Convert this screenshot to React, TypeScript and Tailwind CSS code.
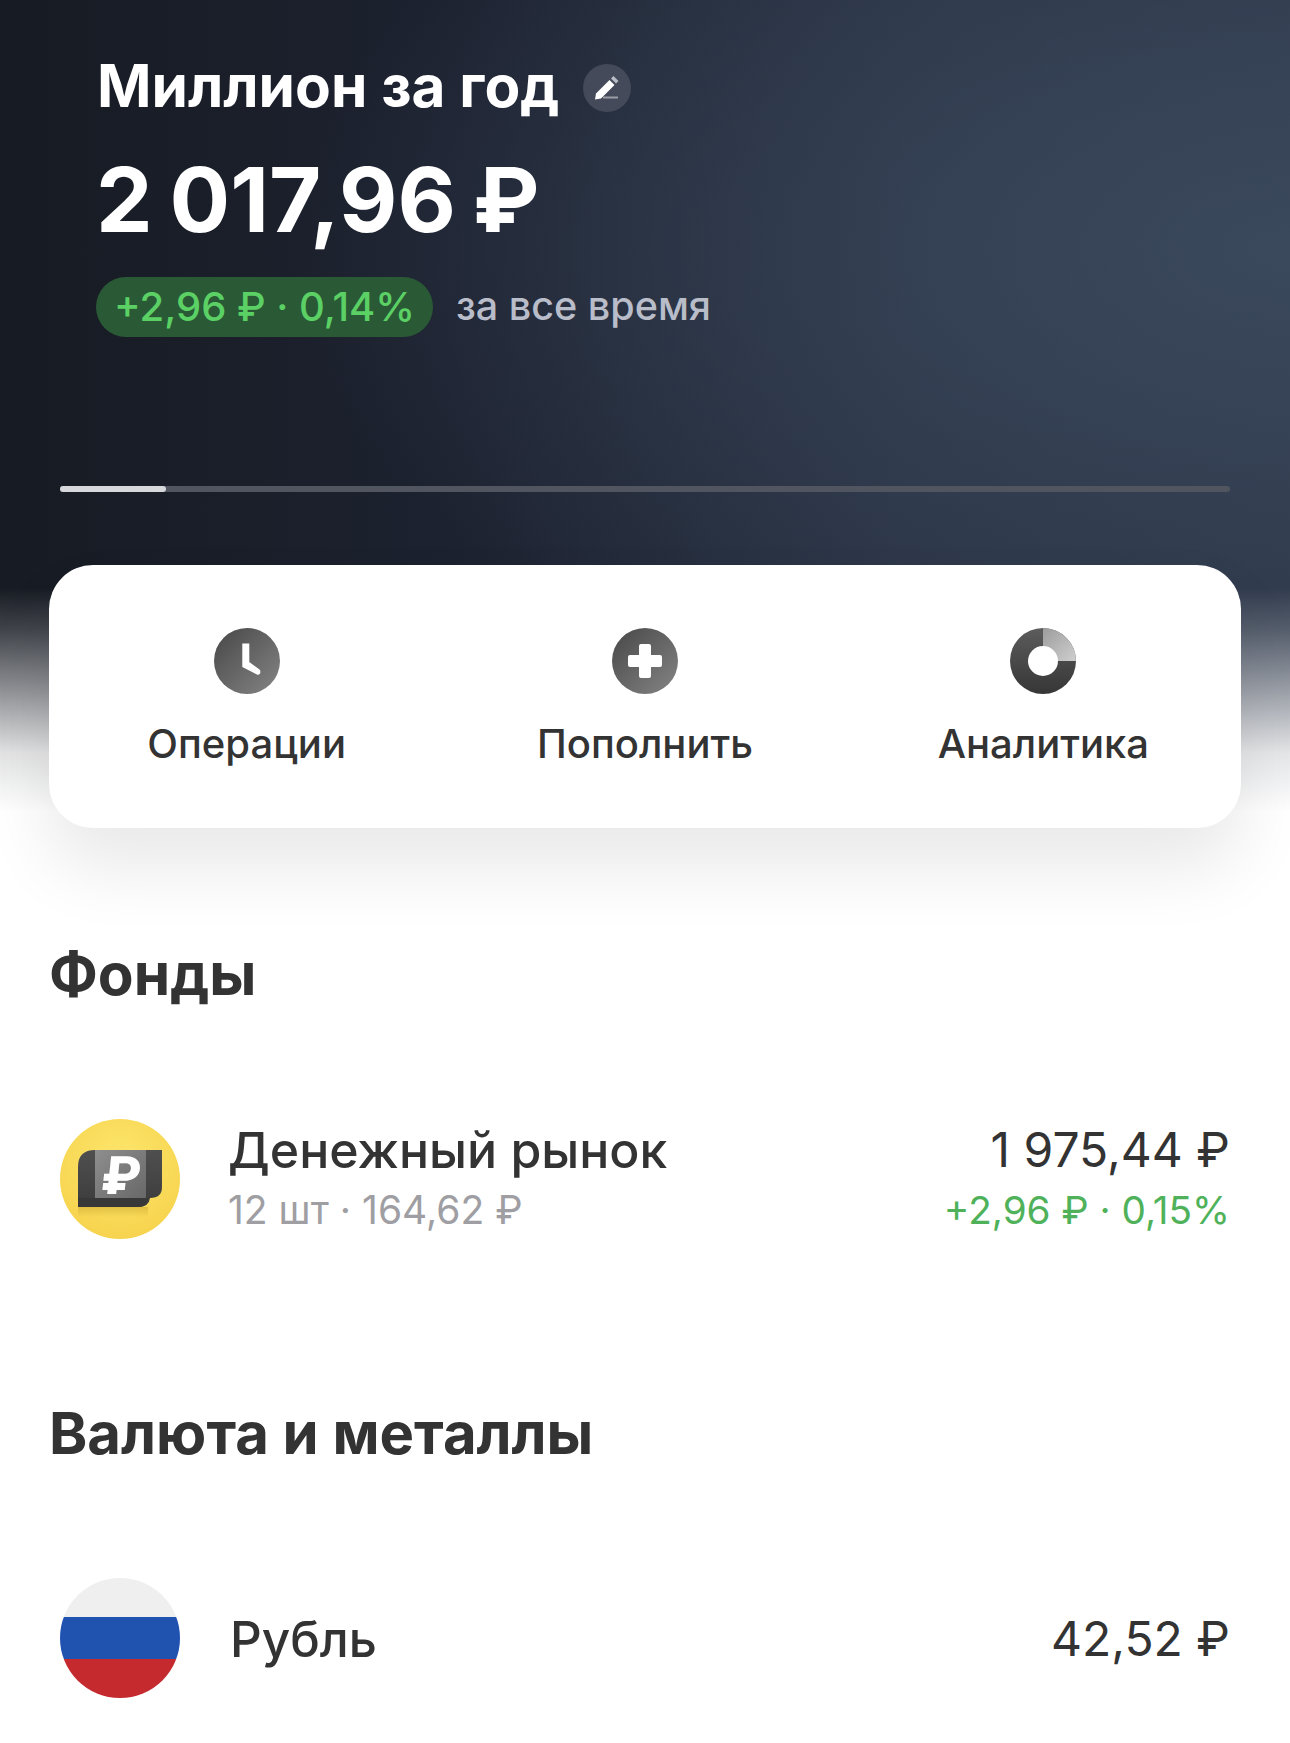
const ink = "text-[#333333]";

function PencilIcon() {
  return (
    <svg width="48" height="48" viewBox="0 0 48 48" aria-hidden="true">
      <circle cx="24" cy="24" r="24" fill="#454a5a" />
      <path d="M13 29.5 26.5 16l5 5L18 34.5l-6 1z" fill="#ffffff" />
      <path d="m28 14.5 2.5-2.5 5 5-2.5 2.5z" fill="#b9bcc6" />
      <rect x="20" y="32.5" width="15" height="2" fill="#9a9ca6" />
    </svg>
  );
}

function ClockIcon() {
  return (
    <svg width="66" height="66" viewBox="0 0 66 66" aria-hidden="true">
      <defs>
        <linearGradient id="clockFill" x1="0" y1="0" x2="1" y2="1">
          <stop offset="0" stopColor="#474747" />
          <stop offset="1" stopColor="#858585" />
        </linearGradient>
      </defs>
      <circle cx="33" cy="33" r="33" fill="url(#clockFill)" />
      <path d="M28.3 15.5h7V34l10.2 7.5q1.5 1.5.5 4-1 2-3 1L28.3 39z" fill="#ffffff" />
    </svg>
  );
}

function PlusIcon() {
  return (
    <svg width="66" height="66" viewBox="0 0 66 66" aria-hidden="true">
      <defs>
        <linearGradient id="plusFill" x1="0" y1="0" x2="1" y2="1">
          <stop offset="0" stopColor="#474747" />
          <stop offset="1" stopColor="#858585" />
        </linearGradient>
      </defs>
      <circle cx="33" cy="33" r="33" fill="url(#plusFill)" />
      <path
        d="M29 16h8a2 2 0 0 1 2 2v9h9a2 2 0 0 1 2 2v8a2 2 0 0 1-2 2h-9v9a2 2 0 0 1-2 2h-8a2 2 0 0 1-2-2v-9h-9a2 2 0 0 1-2-2v-8a2 2 0 0 1 2-2h9v-9a2 2 0 0 1 2-2z"
        fill="#ffffff"
      />
    </svg>
  );
}

function ChartIcon() {
  return (
    <svg width="66" height="66" viewBox="0 0 66 66" aria-hidden="true">
      <defs>
        <linearGradient id="ringDark" x1="0" y1="0" x2="0" y2="1">
          <stop offset="0" stopColor="#5c5c5c" />
          <stop offset="1" stopColor="#363636" />
        </linearGradient>
        <linearGradient id="ringLight" x1="0" y1="0" x2="1" y2="1">
          <stop offset="0" stopColor="#9c9c9c" />
          <stop offset="1" stopColor="#cfcfcf" />
        </linearGradient>
      </defs>
      <circle cx="33" cy="33" r="33" fill="url(#ringDark)" />
      <path d="M33 0a33 33 0 0 1 33 33H33z" fill="url(#ringLight)" />
      <circle cx="33" cy="33" r="15" fill="#ffffff" />
    </svg>
  );
}

function FundIcon() {
  return (
    <svg width="120" height="120" viewBox="0 0 120 120" aria-hidden="true">
      <defs>
        <radialGradient id="fundBg" cx="0.5" cy="0.35" r="0.7">
          <stop offset="0" stopColor="#fde66c" />
          <stop offset="1" stopColor="#f6d24c" />
        </radialGradient>
        <linearGradient id="walletBody" x1="0" y1="0" x2="0" y2="1">
          <stop offset="0" stopColor="#4f4f4f" />
          <stop offset="1" stopColor="#3c3c3c" />
        </linearGradient>
        <linearGradient id="walletBand" x1="0" y1="0" x2="1" y2="1">
          <stop offset="0" stopColor="#8e8e8e" />
          <stop offset="1" stopColor="#686868" />
        </linearGradient>
        <linearGradient id="walletShade" x1="0" y1="0" x2="0" y2="1">
          <stop offset="0" stopColor="#c9a52e" stopOpacity="0.5" />
          <stop offset="1" stopColor="#c9a52e" stopOpacity="0" />
        </linearGradient>
      </defs>
      <circle cx="60" cy="60" r="60" fill="url(#fundBg)" />
      <rect x="18" y="88" width="70" height="10" fill="url(#walletShade)" />
      <path d="M18 88V48q0-17 17-17h67v37q0 11-12 11q-1 9-12 9z" fill="url(#walletBody)" />
      <path d="M18 79h70q-1 9-10 9H18z" fill="#383838" />
      <rect x="35" y="31" width="51" height="48" fill="url(#walletBand)" />
      <text
        x="60"
        y="75"
        textAnchor="middle"
        fontFamily="Inter, sans-serif"
        fontWeight="800"
        fontSize="52"
        fill="#ffffff"
        transform="skewX(-6) translate(7 0)"
      >
        ₽
      </text>
    </svg>
  );
}

function FlagIcon() {
  return (
    <div className="flex h-[120px] w-[120px] shrink-0 flex-col overflow-hidden rounded-full">
      <div className="h-[39px] bg-[#efefef]" />
      <div className="h-[42px] bg-[#2052b0]" />
      <div className="h-[39px] bg-[#c42a2e]" />
    </div>
  );
}

function Action({ icon, label }: { icon: React.ReactNode; label: string }) {
  return (
    <div className="flex flex-col items-center gap-[26px]">
      {icon}
      <span className={`text-[40px] leading-[48px] font-medium ${ink}`}>{label}</span>
    </div>
  );
}

export default function App() {
  return (
    <div className="h-[1743px] w-full overflow-hidden bg-white font-['Inter',sans-serif]">
      <header className="h-[828px] bg-[linear-gradient(to_bottom,rgba(255,255,255,0)_0%,rgba(255,255,255,0)_71%,rgba(255,255,255,0.18)_76%,rgba(255,255,255,0.55)_84%,rgba(255,255,255,0.88)_91%,#ffffff_98%),radial-gradient(ellipse_1000px_520px_at_100%_30%,#3b495d_0%,rgba(59,73,93,0)_100%),linear-gradient(90deg,#171b23_0%,#1d2230_35%,#283142_70%,#2c3546_100%)] px-[49px] pt-[52px]">
        <div className="pl-[48px]">
          <div className="flex h-[68px] items-center">
            <h1 className="text-[58.5px] leading-[68px] font-bold text-white">Миллион за год</h1>
            <span className="mt-[4px] ml-[24px] flex">
              <PencilIcon />
            </span>
          </div>
          <div className="mt-[30px] -ml-[1px] h-[100px] text-[90px] leading-[100px] font-bold text-white [word-spacing:-0.05em]">
            2 017,96 ₽
          </div>
          <div className="mt-[27px] -ml-[1px] flex h-[60px] items-center">
            <span className="flex h-[60px] items-center rounded-full bg-[#2a5a35] px-[18px] text-[40px] font-medium text-[#5bd165]">
              +2,96 ₽ · 0,14%
            </span>
            <span className="ml-[23px] text-[39.5px] font-medium text-[#b9bdc9]">за все время</span>
          </div>
        </div>
        <div className="mx-[11px] mt-[149px] h-[6px] rounded-full bg-[#50555f]">
          <div className="h-[6px] w-[106px] rounded-full bg-[#d6d8dc]" />
        </div>
        <div className="mt-[73px] grid h-[263px] grid-cols-3 gap-x-[3px] rounded-[44px] bg-white pt-[63px] shadow-[0_40px_70px_rgba(0,0,0,0.09)]">
          <Action icon={<ClockIcon />} label="Операции" />
          <Action icon={<PlusIcon />} label="Пополнить" />
          <Action icon={<ChartIcon />} label="Аналитика" />
        </div>
      </header>

      <main className="px-[49px]">
        <h2 className={`mt-[112px] text-[58.5px] leading-[68px] font-bold ${ink}`}>Фонды</h2>
        <div className="mt-[111px] flex items-center px-[11px]">
          <FundIcon />
          <div className="ml-[48px] flex-1">
            <div className={`text-[50px] leading-[62px] font-medium ${ink}`}>Денежный рынок</div>
            <div className="text-[39px] leading-[58px] text-[#9e9ea3]">12 шт · 164,62 ₽</div>
          </div>
          <div className="text-right">
            <div className={`text-[48px] leading-[62px] ${ink}`}>1 975,44 ₽</div>
            <div className="text-[38.7px] leading-[58px] text-[#4fb25a]">+2,96 ₽ · 0,15%</div>
          </div>
        </div>
        <h2 className={`mt-[160px] text-[58px] leading-[68px] font-bold ${ink}`}>Валюта и металлы</h2>
        <div className="mt-[111px] flex items-center px-[11px]">
          <FlagIcon />
          <div className={`ml-[50px] flex-1 pt-[2px] text-[49.5px] leading-[60px] font-medium ${ink}`}>Рубль</div>
          <div className={`pt-[2px] text-[48px] leading-[60px] ${ink}`}>42,52 ₽</div>
        </div>
      </main>
    </div>
  );
}
